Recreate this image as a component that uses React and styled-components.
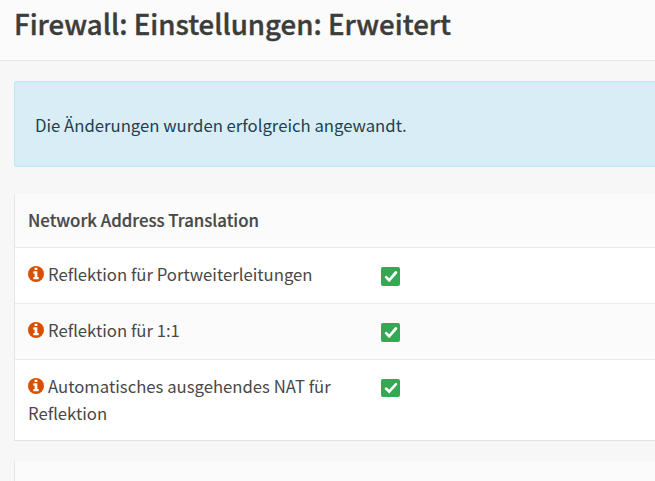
import React from "react";
import styled, { createGlobalStyle } from "styled-components";

const Global = createGlobalStyle`
  * { box-sizing: border-box; }
  body { margin: 0; background: #f7f7f7; color: #484848; overflow: hidden;
    font: 16.72px/27px "Noto Sans CJK SC", "Noto Sans", sans-serif; }
`;
const Page = styled.div`height: 481px; overflow: hidden;`;
const Header = styled.header`
  height: 61px; padding: 4px 14px 0; background: #fbfbfb; border-bottom: 1px solid #e7e7e7;
`;
const Title = styled.h1`
  margin: 0; font-size: 27.65px; line-height: 38px; font-weight: 500; white-space: nowrap; color: #3c3c3b;
  -webkit-text-stroke: 0.4px #3c3c3b;
`;
const Content = styled.main`padding: 20px 0 0 14px;`;
const Alert = styled.div`
  height: 86px; padding: 30px 20px; background: #d9edf7; border: 1px solid #bce8f1;
  border-right: 0; border-radius: 3px 0 0 3px; color: #1f3f50; white-space: nowrap;
`;
const Panel = styled.section`
  margin-top: ${(p) => p.$gap}px; border-left: 1px solid #e5e5e5; border-bottom: 1px solid #e1e1e1; background: #fbfbfb;
  min-height: 30px;
`;
const Row = styled.div`
  display: grid; grid-template-columns: 353px 1fr; height: ${(p) => p.$h}px;
  padding: 13px 0 0 13px; background: ${(p) => (p.$alt ? "#fbfbfb" : "#fff")};
  border-top: ${(p) => (p.$head ? 0 : "1px solid #ebebeb")};
`;
const Label = styled.div`
  white-space: nowrap; font-weight: ${(p) => (p.$bold ? 500 : 400)};
  font-size: ${(p) => (p.$bold ? "16.8px" : "inherit")};
  -webkit-text-stroke: ${(p) => (p.$bold ? "0.2px" : "0")};
`;
const InfoSvg = styled.svg`width: 16px; height: 16px; margin-right: 4px; vertical-align: -1px;`;

function Info() {
  return (
    <InfoSvg viewBox="0 0 1536 1536">
      <path fill="#d94f00" d="M1536 768a768 768 0 1 1-1536 0a768 768 0 1 1 1536 0z" />
      <path fill="#fff" d="M1024 1248v-160q0-14-9-23t-23-9h-96V544q0-14-9-23t-23-9H544q-14 0-23 9t-9 23v160q0 14 9 23t23 9h96v320h-96q-14 0-23 9t-9 23v160q0 14 9 23t23 9h448q14 0 23-9t9-23zM896 352V192q0-14-9-23t-23-9H672q-14 0-23 9t-9 23v160q0 14 9 23t23 9h192q14 0 23-9t9-23z" />
    </InfoSvg>
  );
}
const CheckSvg = styled.svg`display: block; width: 19px; height: ${(p) => p.$h}px; margin-top: 6px;`;
function Check({ height = 19 }) {
  return (
    <CheckSvg $h={height} viewBox="0 0 19 19" preserveAspectRatio="none">
      <rect width="19" height="19" rx="2" fill="#34a853" />
      <path d="M5.1 10.1 8.2 13.3 14.9 5.5" fill="none" stroke="#fff" strokeWidth="2.7" strokeLinecap="round" />
    </CheckSvg>
  );
}

export default function App() {
  return (
    <Page>
      <Global />
      <Header><Title>Firewall: Einstellungen: Erweitert</Title></Header>
      <Content>
        <Alert>Die Änderungen wurden erfolgreich angewandt.</Alert>
        <Panel $gap={27}>
          <Row $head $alt $h={53}><Label $bold>Network Address Translation</Label></Row>
          <Row $h={56}><Label><Info />Reflektion für Portweiterleitungen</Label><Check /></Row>
          <Row $alt $h={56}><Label><Info />Reflektion für 1:1</Label><Check /></Row>
          <Row $h={81}><Label><Info />Automatisches ausgehendes NAT für<br />Reflektion</Label><Check height={18} /></Row>
        </Panel>
        <Panel $gap={20} />
      </Content>
    </Page>
  );
}
